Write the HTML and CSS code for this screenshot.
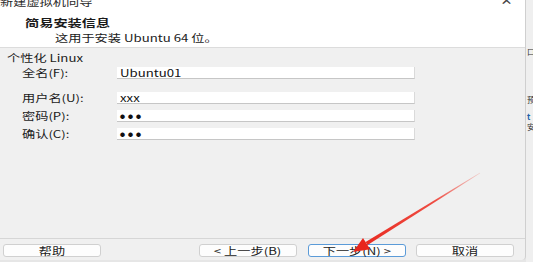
FILE: index.html
```html
<!DOCTYPE html>
<html lang="zh-CN">
<head>
    <meta charset="UTF-8">
    <title>新建虚拟机向导</title>
    <link rel="stylesheet" href="styles.css">
</head>
<body>
    <div class="screen">
        <div class="dialog">
            <div class="header">
                <div class="titlebar">
                    <span class="t title">新建虚拟机向导</span>
                    <span class="close">✕</span>
                </div>
                <div class="info">
                    <div class="heading"><span class="t">简易安装信息</span></div>
                    <div class="sub"><span class="t">这用于安装 Ubuntu 64 位。</span></div>
                </div>
            </div>
            <div class="body">
                <div class="group"><span class="t">个性化 Linux</span></div>
                <div class="row row1">
                    <label class="t">全名(F):</label>
                    <div class="field"><span class="t">Ubuntu01</span></div>
                </div>
                <div class="row row2">
                    <label class="t">用户名(U):</label>
                    <div class="field"><span class="t">xxx</span></div>
                </div>
                <div class="row row3">
                    <label class="t">密码(P):</label>
                    <div class="field"><span class="dots">●●●</span></div>
                </div>
                <div class="row row4">
                    <label class="t">确认(C):</label>
                    <div class="field"><span class="dots">●●●</span></div>
                </div>
            </div>
            <div class="footer">
                <span class="btn"><span class="t">帮助</span></span>
                <span class="btn prev"><span class="t">&lt; 上一步(B)</span></span>
                <span class="btn next"><span class="t">下一步(N) &gt;</span></span>
                <span class="btn cancel"><span class="t">取消</span></span>
            </div>
        </div>
        <div class="side">
            <span class="s1">口</span>
            <span class="s2">预</span>
            <span class="s3">t</span>
            <span class="s4">安</span>
        </div>

        <!-- 红色箭头 -->
        <svg class="arrow" width="533" height="262" viewBox="0 0 533 262">
            <defs>
                <linearGradient id="fade" x1="480" y1="173" x2="353" y2="252" gradientUnits="userSpaceOnUse">
                    <stop offset="0" stop-color="#f04a3e" stop-opacity="0.2"/>
                    <stop offset="0.35" stop-color="#ee3b30" stop-opacity="0.9"/>
                    <stop offset="1" stop-color="#e8261c"/>
                </linearGradient>
            </defs>
            <polygon points="480.2,173.3 479.8,172.7 365.6,242.1 367.6,245.1" fill="url(#fade)"/>
            <polygon points="353,252 363.0,238.0 370.2,249.2" fill="#e8261c"/>
        </svg>
    </div>
</body>
</html>
```

FILE: styles.css
```css
*{
    margin: 0;
    padding: 0;
    box-sizing: border-box;
}
body{
    width: 533px;
    height: 262px;
    overflow: hidden;
    font-family: "Noto Sans CJK SC", "Noto Sans", sans-serif;
    font-size: 10px;
    color: #1b1b1b;
    background: #e6e6e6;
}
.screen{
    position: relative;
    display: flex;
    width: 533px;
    height: 262px;
}
.t{
    display: inline-block;
    transform: scaleX(1.32);
    transform-origin: left center;
    white-space: nowrap;
    line-height: 12px;
}
.dialog{
    width: 526px;
    height: 260px;
    display: flex;
    flex-direction: column;
    border-right: 1px solid #cfcfcf;
    border-bottom-right-radius: 4px;
    background: #f0f0f0;
    overflow: hidden;
}
.header{
    height: 48px;
    background: #fff;
    border-bottom: 1px solid #dcdcdc;
}
.titlebar{
    height: 10px;
    display: flex;
    justify-content: space-between;
    padding-right: 13px;
    overflow: hidden;
}
.title{
    margin-top: -4px;
    color: #2a2a2a;
}
.close{
    margin-top: -5px;
    font-size: 13px;
    line-height: 12px;
    color: #444;
    font-family: "DejaVu Sans", sans-serif;
    transform: scaleX(1.1);
}
.info{
    padding: 5px 0 0 25px;
}
.heading{
    font-weight: bold;
}
.heading .t{
    transform: scaleX(1.42);
}
.sub{
    padding-left: 30px;
}
.body{
    flex: 1;
    padding: 2px 0 0 7px;
}
.row{
    display: flex;
    align-items: center;
    padding-left: 15px;
}
.row label{
    width: 95px;
}
.row1{ margin-top: 2px; }
.row2{ margin-top: 13px; }
.row3{ margin-top: 6px; }
.row4{ margin-top: 6px; }
.field{
    width: 298px;
    height: 12px;
    background: #fff;
    border-bottom: 1px solid #c6c6c6;
    border-right: 1px solid #dadada;
    padding-left: 3px;
    display: flex;
    align-items: center;
    color: #111;
}
.field .t{
    line-height: 11px;
}
.dots{
    font-size: 5px;
    letter-spacing: 3px;
    line-height: 11px;
    color: #111;
}
.footer{
    display: flex;
    border-top: 1px solid #d6d6d6;
    padding: 5px 0 3px 3px;
}
.btn{
    width: 98px;
    height: 13px;
    display: flex;
    justify-content: center;
    align-items: center;
    background: #fdfdfd;
    border: 1px solid #d0d0d0;
    border-radius: 3px;
    color: #222;
}
.btn .t{
    transform-origin: center;
    line-height: 11px;
}
.prev{
    margin-left: 98px;
}
.next{
    margin-left: 11px;
    border-color: #5b9bd8;
}
.cancel{
    margin-left: 10px;
}
.side{
    flex: 1;
    display: flex;
    flex-direction: column;
    overflow: hidden;
    background: #efefef;
    font-size: 8px;
    line-height: 8px;
    color: #333;
    padding-left: 1px;
}
.s1{ margin-top: 48px; }
.s2{ margin-top: 40px; }
.s3{ margin-top: 9px; color: #1a5fa8; font-weight: bold; }
.s4{ margin-top: 2px; }
.arrow{
    position: absolute;
    left: 0;
    top: 0;
    pointer-events: none;
}
```
